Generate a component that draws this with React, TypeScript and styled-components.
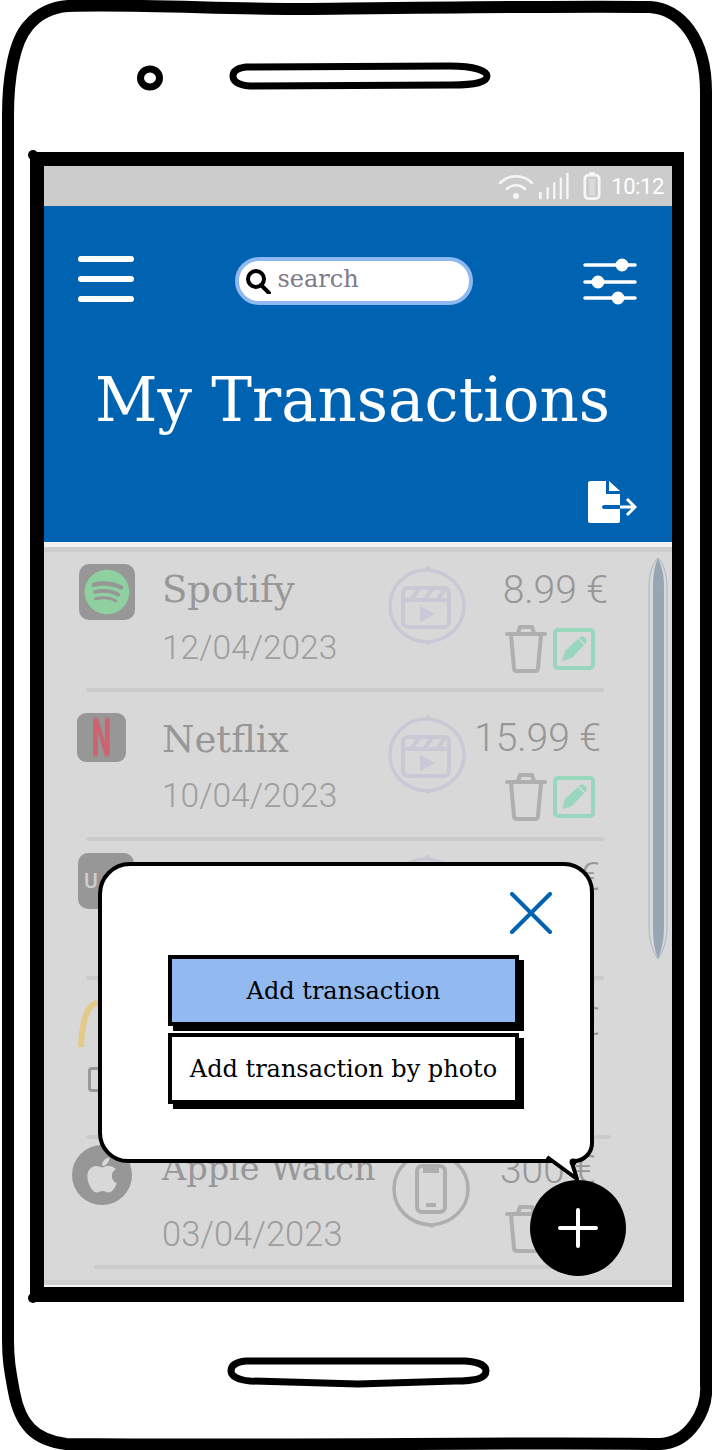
import React from 'react';
import styled, { createGlobalStyle } from 'styled-components';
import { FaApple, FaSpotify } from 'react-icons/fa';

const SLAB = '"DejaVu Serif", serif';
const BLUE = '#0063b1';

const GlobalStyle = createGlobalStyle`
    html, body {
        margin: 0;
        padding: 0;
        background: #fff;
    }
    * {
        box-sizing: border-box;
    }
`;

const Phone = styled.div`
    position: relative;
    width: 712px;
    height: 1450px;
    padding: 166px 40px 0 44px;
    background: #fff;
    overflow: hidden;
`;
const FrameDrawing = styled.svg`
    position: absolute;
    left: 0;
    top: 0;
    pointer-events: none;
`;
const Screen = styled.div`
    position: relative;
    width: 628px;
    height: 1121px;
    display: flex;
    flex-direction: column;
    overflow: hidden;
`;
const StatusBar = styled.div`
    height: 40px;
    flex: none;
    background: #cccccc;
    display: flex;
    align-items: center;
    justify-content: flex-end;
    padding-right: 8px;
    color: #f6f6f6;
`;
const StatusTime = styled.span`
    font-family: Roboto, sans-serif;
    font-size: 22px;
    letter-spacing: -0.4px;
    margin-left: 10px;
    color: #fff;
`;
const Header = styled.header`
    height: 336px;
    flex: none;
    background: ${BLUE};
    padding: 50px 34px 0;
    display: flex;
    flex-direction: column;
`;
const TopRow = styled.div`
    display: flex;
    align-items: flex-start;
    justify-content: space-between;
`;
const Burger = styled.div`
    width: 56px;
    height: 46px;
    display: flex;
    flex-direction: column;
    justify-content: space-between;
    span {
        display: block;
        height: 6px;
        border-radius: 3px;
        background: #fff;
    }
`;
const SearchBox = styled.div`
    width: 238px;
    height: 48px;
    margin: 1px 10px 0 0;
    border: 4px solid #8fb8f0;
    border-radius: 24px;
    background: #fff;
    display: flex;
    align-items: center;
    gap: 7px;
    padding-left: 7px;
    color: #7d7a8a;
    font-family: ${SLAB};
    font-size: 24px;
`;
const SearchText = styled.span`
    margin-bottom: 4px;
`;
const Title = styled.h1`
    margin: 49px 11px 0 0;
    text-align: center;
    color: #fff;
    font-family: ${SLAB};
    font-weight: 400;
    font-size: 61px;
    line-height: 90px;
    white-space: nowrap;
`;
const ExportRow = styled.div`
    display: flex;
    justify-content: flex-end;
    margin: 35px 1px 0 0;
`;
const Rule = styled.div`
    height: 5px;
    flex: none;
    background: #f2f2f2;
`;
const TopBand = styled.div`
    height: 5px;
    flex: none;
    background: #cecece;
`;
const List = styled.div`
    flex: 1;
    background: #d8d8d8;
    display: flex;
    flex-direction: column;
`;
const Row = styled.div<{ $height: number; $top: number }>`
    position: relative;
    height: ${p => p.$height}px;
    flex: none;
    padding: ${p => p.$top}px 64px 0 0;
    display: grid;
    grid-template-columns: 118px 226px 80px 1fr;
    align-items: start;
`;
const LogoCell = styled.div<{ $x: number }>`
    padding-left: ${p => p.$x}px;
`;
const SquareLogo = styled.div<{ $size: number; $tone?: string; $align?: string }>`
    width: ${p => p.$size}px;
    height: ${p => p.$size}px;
    border-radius: ${p => (p.$size > 50 ? 10 : 9)}px;
    background: #979797;
    color: ${p => p.$tone ?? '#8fd0a0'};
    display: flex;
    align-items: center;
    justify-content: ${p => p.$align ?? 'center'};
`;
const NetflixLetter = styled.span`
    font-family: Roboto, sans-serif;
    font-weight: 900;
    font-size: 44px;
    line-height: 1;
    transform: scale(0.64, 1.2);
    filter: blur(1px);
`;
const UberLetter = styled.span`
    margin-left: 6px;
    font-family: Roboto, sans-serif;
    font-weight: 500;
    font-size: 21px;
    color: #cfcfcf;
`;
const RoundLogo = styled.div`
    width: 60px;
    height: 60px;
    border-radius: 50%;
    background: #979797;
    color: #d8d8d8;
    display: flex;
    align-items: center;
    justify-content: center;
`;
const SmallTag = styled.div`
    width: 30px;
    height: 25px;
    margin: 19px 0 0 12px;
    border: 3px solid #999;
    border-radius: 4px;
`;
const TextCell = styled.div<{ $top: number }>`
    padding-top: ${p => p.$top}px;
    display: flex;
    flex-direction: column;
`;
const RowTitle = styled.div<{ $size: number }>`
    color: #979797;
    font-family: ${SLAB};
    font-size: ${p => p.$size}px;
    line-height: 44px;
    white-space: nowrap;
`;
const RowDate = styled.div<{ $gap: number; $size: number }>`
    margin-top: ${p => p.$gap}px;
    color: #9e9e9e;
    font-family: Roboto, sans-serif;
    font-weight: 300;
    font-size: ${p => p.$size}px;
    line-height: 40px;
    white-space: nowrap;
`;
const CategoryCell = styled.div<{ $top: number; $x: number }>`
    padding: ${p => p.$top}px 0 0 ${p => p.$x}px;
`;
const AmountCell = styled.div<{ $top: number; $right: number }>`
    padding: ${p => p.$top}px ${p => p.$right}px 0 0;
    display: flex;
    flex-direction: column;
    align-items: flex-end;
`;
const Amount = styled.div`
    color: #979797;
    font-family: Roboto, sans-serif;
    font-weight: 300;
    font-size: 39px;
    line-height: 44px;
    white-space: nowrap;
`;
const Actions = styled.div<{ $right: number }>`
    display: flex;
    align-items: flex-start;
    gap: 6px;
    margin: 13px ${p => -p.$right + 13}px 0 0;
`;
const EditBox = styled.div`
    width: 42px;
    height: 42px;
    margin-top: 3px;
    border: 4px solid #98d6bd;
    border-radius: 5px;
    display: flex;
    align-items: center;
    justify-content: center;
`;
const Divider = styled.div<{ $left: number; $right: number }>`
    position: absolute;
    left: ${p => p.$left}px;
    right: ${p => p.$right}px;
    bottom: 0;
    height: 4px;
    background: #cbcbcb;
    border-radius: 3px;
`;
const BottomBand = styled.div`
    margin-top: auto;
    height: 7px;
    flex: none;
    background: #cfcfcf;
    border-bottom: 2px solid #f4f4f4;
`;
const Scrollbar = styled.svg`
    position: absolute;
    left: 604px;
    top: 391px;
`;
const Popup = styled.div`
    position: absolute;
    left: 54px;
    top: 696px;
    width: 496px;
    height: 301px;
    padding: 26px 38px 0 66px;
    background: #fff;
    border: 4px solid #000;
    border-radius: 32px 30px 20px 30px;
`;
const PopupTail = styled.svg`
    position: absolute;
    left: 438px;
    top: 289px;
`;
const CloseIcon = styled.svg`
    display: block;
    margin-left: auto;
`;
const PopupButtons = styled.div`
    margin-top: 21px;
    display: flex;
    flex-direction: column;
    gap: 7px;
`;
const PopupButton = styled.div<{ $primary?: boolean }>`
    width: 351px;
    height: 71px;
    border: 4px solid #000;
    box-shadow: 5px 5px 0 #000;
    background: ${p => (p.$primary ? '#93b9f1' : '#fff')};
    color: #000;
    font-family: ${SLAB};
    font-size: 24px;
    display: flex;
    align-items: center;
    justify-content: center;
    white-space: nowrap;
`;
const Fab = styled.div`
    position: absolute;
    left: 486px;
    top: 1014px;
    width: 96px;
    height: 96px;
    border-radius: 50%;
    background: #000;
    display: flex;
    align-items: center;
    justify-content: center;
`;

const PhoneFrame = () => (
    <FrameDrawing width={712} height={1450} viewBox="0 0 712 1450" fill="none" stroke="#000" strokeLinecap="round" strokeLinejoin="round">
        <path strokeWidth={12} d="M8 115 C8 78 14 42 28 26 C38 14 52 7 68 6 C140 4 220 9 295 9 C400 8 560 6 650 7 C680 9 706 38 706 92 L706 1385 C708 1410 690 1443 660 1444 C520 1442 300 1446 66 1444 C34 1440 20 1424 14 1392 C10 1370 8 1360 8 1340 Z" />
        <ellipse cx={150} cy={78} rx={9.5} ry={9} strokeWidth={7} />
        <path strokeWidth={7} d="M246 67 L450 66 C475 66 487 71 487 76 C487 82 476 85 452 85 L250 86 C238 85 233 81 233 76 C233 71 238 68 246 67 Z" />
        <path strokeWidth={7} d="M246 1361 L465 1361 C482 1362 486 1367 486 1371 C486 1378 476 1381 455 1381 L358 1384 L250 1381 C238 1380 231 1376 231 1371 C231 1365 236 1362 246 1361 Z" />
        <path fill="#000" stroke="none" fillRule="evenodd" d="M30 152 L684 152 L684 1302 L30 1302 Z M44 166 L44 1287 L672 1287 L672 166 Z" />
        <circle cx={33} cy={155} r={5} fill="#000" stroke="none" />
        <circle cx={33} cy={1298} r={5} fill="#000" stroke="none" />
    </FrameDrawing>
);

const Wifi = () => (
    <svg width={36} height={27} viewBox="0 0 36 27" fill="none" stroke="currentColor" strokeWidth={2.5} strokeLinecap="round">
        <path d="M2 10 C11 1 25 1 34 10" />
        <path d="M9 16 C14 11 22 11 27 16" />
        <circle cx={18} cy={23} r={3} fill="currentColor" stroke="none" />
    </svg>
);

const Signal = () => (
    <svg width={32} height={28} viewBox="0 0 34 28" fill="currentColor" style={{ marginLeft: 4 }}>
        <rect x={1} y={20} width={3} height={8} rx={1} />
        <rect x={9} y={15} width={2.5} height={13} rx={1} />
        <rect x={16} y={10} width={2.5} height={18} rx={1} />
        <rect x={23} y={5} width={2.5} height={23} rx={1} />
        <rect x={30} y={0} width={2.5} height={28} rx={1} />
    </svg>
);

const Battery = () => (
    <svg width={18} height={32} viewBox="0 0 20 32" fill="none" stroke="currentColor" strokeWidth={3} style={{ marginLeft: 13 }}>
        <rect x={2} y={4} width={16} height={26} rx={4} />
        <rect x={7} y={8} width={6} height={18} fill="currentColor" fillOpacity={0.35} strokeWidth={0} />
        <path d="M7 2 L13 2" />
    </svg>
);

const Magnifier = () => (
    <svg width={25} height={25} viewBox="0 0 25 25" fill="none" stroke="#000" strokeWidth={4}>
        <circle cx={10} cy={10} r={8} />
        <path d="M15 16 L23 24" strokeLinecap="round" />
    </svg>
);

const Sliders = () => (
    <svg width={54} height={48} viewBox="0 0 54 48" fill="#fff" stroke="#fff" strokeWidth={3.5} strokeLinecap="round" style={{ margin: '2px 1px 0 0' }}>
        <path d="M2 7 L52 7 M2 24 L52 24 M2 40 L52 40" />
        <circle cx={39} cy={7} r={5.5} strokeWidth={2} />
        <circle cx={15} cy={24} r={5.5} strokeWidth={2} />
        <circle cx={35} cy={40} r={5.5} strokeWidth={2} />
    </svg>
);

const ExportIcon = () => (
    <svg width={50} height={44} viewBox="0 0 50 44" style={{ display: 'block' }}>
        <path fill="#fff" d="M3 1 L19 1 L19 14 L33 14 L33 41 C33 42 32 43 31 43 L3 43 C2 43 1 42 1 41 L1 3 C1 2 2 1 3 1 Z" />
        <path fill="#fff" d="M22 1 L33 11 L22 11 Z" />
        <path stroke={BLUE} strokeWidth={4} strokeLinecap="round" d="M17 27 L32 27" />
        <path stroke="#fff" strokeWidth={3} fill="none" d="M33 27 L47 27 M40 19 L48 27 L40 35" />
    </svg>
);

const Clapper = () => (
    <g fill="none" stroke="currentColor" strokeWidth={4}>
        <rect x={15} y={22} width={46} height={39} rx={5} />
        <path d="M15 34 L61 34" />
        <path d="M24 33 L31 23 M37 33 L44 23 M50 33 L57 23" />
        <path fill="currentColor" stroke="none" d="M32 40 L47 48 L32 56 Z" />
    </g>
);

const PhoneGlyph = () => (
    <g fill="none" stroke="currentColor" strokeWidth={4}>
        <rect x={25} y={17} width={28} height={46} rx={5} />
        <path fill="currentColor" d="M33 18 L45 18 L45 22 L33 22 Z" />
        <path d="M34 56 L44 56" />
    </g>
);

const CategoryIcon: React.FC<{ kind: 'film' | 'phone'; color: string }> = ({ kind, color }) => (
    <svg width={78} height={80} viewBox="0 0 78 80" style={{ color, display: 'block' }}>
        <path fill="none" stroke="currentColor" strokeWidth={3.5} d="M40 2 L40 4 C60 6 76 20 76 40 C76 60 60 74 40 76 L40 78 L39 76 C18 75 2 60 2 40 C2 20 18 4 38 4 Z" />
        {kind === 'film' ? <Clapper /> : <PhoneGlyph />}
    </svg>
);

const Trash = () => (
    <svg width={42} height={48} viewBox="0 0 42 48" fill="none" stroke="#afafaf" strokeWidth={4} strokeLinejoin="round" strokeLinecap="round" style={{ display: 'block' }}>
        <path d="M2 9 L40 9" />
        <path d="M13 8 L15 2 L27 2 L29 8" />
        <path d="M6 10 L9 43 C9 45 10 46 12 46 L30 46 C32 46 33 45 33 43 L36 10" />
    </svg>
);

const Pencil = () => (
    <svg width={26} height={26} viewBox="0 0 26 26" fill="#98d6bd">
        <path d="M1 25 L4 15 L17 3 L23 9 L11 22 Z" />
        <path d="M19 1 C20 0 22 0 23 1 L25 3 C26 4 26 6 25 7 L24 8 L18 2 Z" />
    </svg>
);

const McArch = () => (
    <svg width={50} height={48} viewBox="0 0 50 48" fill="none" stroke="#e3ca88" strokeWidth={6} style={{ display: 'block' }}>
        <path d="M5 47 C6 20 12 3 22 3 C30 3 34 20 36 47" />
    </svg>
);

const PlusIcon = () => (
    <svg width={40} height={40} viewBox="0 0 40 40" stroke="#fff" strokeWidth={4} strokeLinecap="round">
        <path d="M20 2 L20 38 M2 20 L38 20" />
    </svg>
);

type RowData = {
    id: string;
    height: number;
    top: number;
    logoX: number;
    logo: React.ReactNode;
    title?: string;
    titleSize?: number;
    titleTop?: number;
    date?: string;
    dateGap?: number;
    dateSize?: number;
    kind: 'film' | 'phone';
    kindColor: string;
    kindTop: number;
    kindX: number;
    amount: string;
    amountTop: number;
    amountRight: number;
    actions: boolean;
    divider: [number, number];
};

const rows: RowData[] = [
    {
        id: 'spotify', height: 140, top: 12, logoX: 35,
        logo: <SquareLogo $size={56}><FaSpotify size={46} /></SquareLogo>,
        title: 'Spotify', titleSize: 37, titleTop: 4, date: '12/04/2023', dateGap: 16, dateSize: 33.5,
        kind: 'film', kindColor: '#cbc8d6', kindTop: 2, kindX: 0,
        amount: '8.99 €', amountTop: 4, amountRight: 0, actions: true, divider: [42, 68],
    },
    {
        id: 'netflix', height: 149, top: 21, logoX: 33,
        logo: <SquareLogo $size={49} $tone="#cc6470"><NetflixLetter>N</NetflixLetter></SquareLogo>,
        title: 'Netflix', titleSize: 37, titleTop: 5, date: '10/04/2023', dateGap: 14, dateSize: 33.5,
        kind: 'film', kindColor: '#cbc8d6', kindTop: 2, kindX: 0,
        amount: '15.99 €', amountTop: 3, amountRight: 7, actions: true, divider: [42, 68],
    },
    {
        id: 'uber', height: 139, top: 12, logoX: 34,
        logo: <SquareLogo $size={56} $align="flex-start"><UberLetter>U</UberLetter></SquareLogo>,
        kind: 'film', kindColor: '#cbc8d6', kindTop: 2, kindX: 0,
        amount: '€', amountTop: 2, amountRight: 8, actions: false, divider: [42, 68],
    },
    {
        id: 'mcdonalds', height: 159, top: 20, logoX: 32,
        logo: <><McArch /><SmallTag /></>,
        kind: 'film', kindColor: '#cbc8d6', kindTop: 2, kindX: 0,
        amount: '€', amountTop: 0, amountRight: 8, actions: false, divider: [42, 61],
    },
    {
        id: 'apple', height: 130, top: 6, logoX: 28,
        logo: <RoundLogo><FaApple size={40} /></RoundLogo>,
        title: 'Apple Watch', titleSize: 33.5, titleTop: 2, date: '03/04/2023', dateGap: 23, dateSize: 34.5,
        kind: 'phone', kindColor: '#aeaeae', kindTop: 4, kindX: 4,
        amount: '300 €', amountTop: 3, amountRight: 12, actions: true, divider: [50, 61],
    },
];

export default function App() {
    return (
        <Phone>
            <GlobalStyle />
            <Screen>
                <StatusBar>
                    <Wifi />
                    <Signal />
                    <Battery />
                    <StatusTime>10:12</StatusTime>
                </StatusBar>
                <Header>
                    <TopRow>
                        <Burger><span /><span /><span /></Burger>
                        <SearchBox>
                            <Magnifier />
                            <SearchText>search</SearchText>
                        </SearchBox>
                        <Sliders />
                    </TopRow>
                    <Title>My Transactions</Title>
                    <ExportRow><ExportIcon /></ExportRow>
                </Header>
                <Rule />
                <TopBand />
                <List>
                    {rows.map(r => (
                        <Row key={r.id} $height={r.height} $top={r.top}>
                            <LogoCell $x={r.logoX}>{r.logo}</LogoCell>
                            <TextCell $top={r.titleTop ?? 0}>
                                {r.title && <RowTitle $size={r.titleSize ?? 37}>{r.title}</RowTitle>}
                                {r.date && <RowDate $gap={r.dateGap ?? 0} $size={r.dateSize ?? 33}>{r.date}</RowDate>}
                            </TextCell>
                            <CategoryCell $top={r.kindTop} $x={r.kindX}>
                                <CategoryIcon kind={r.kind} color={r.kindColor} />
                            </CategoryCell>
                            <AmountCell $top={r.amountTop} $right={r.amountRight}>
                                <Amount>{r.amount}</Amount>
                                {r.actions && (
                                    <Actions $right={r.amountRight}>
                                        <Trash />
                                        <EditBox><Pencil /></EditBox>
                                    </Actions>
                                )}
                            </AmountCell>
                            <Divider $left={r.divider[0]} $right={r.divider[1]} />
                        </Row>
                    ))}
                    <BottomBand />
                </List>
                <Scrollbar width={20} height={404} viewBox="0 0 20 404">
                    <path fill="#d8d8d8" stroke="#a9b5c3" strokeWidth={1} d="M10 1 C14 5 19 14 19 30 L19 370 C19 385 14 396 10 402 C6 396 1 385 1 370 L1 30 C1 14 6 5 10 1 Z" />
                    <path fill="#9aa5b3" d="M10 1 C13 8 16 16 16 30 L16 370 C16 385 13 394 10 402 C7 394 5 385 5 370 L5 30 C5 16 7 8 10 1 Z" />
                </Scrollbar>
                <Popup>
                    <CloseIcon width={42} height={42} viewBox="0 0 42 42" fill="none" stroke={BLUE} strokeWidth={4} strokeLinecap="round">
                        <path d="M2 2 L40 40 M40 2 L2 40" />
                    </CloseIcon>
                    <PopupButtons>
                        <PopupButton $primary>Add transaction</PopupButton>
                        <PopupButton>Add transaction by photo</PopupButton>
                    </PopupButtons>
                    <PopupTail width={50} height={30} viewBox="0 0 50 30" overflow="visible">
                        <path fill="#fff" d="M6 2 L36 24 L33 8 L33 2 Z" />
                        <path fill="none" stroke="#000" strokeWidth={4} strokeLinejoin="round" d="M7 2 L37 24 L32 8" />
                        <circle cx={33} cy={7} r={3.5} fill="#000" />
                    </PopupTail>
                </Popup>
                <Fab><PlusIcon /></Fab>
            </Screen>
            <PhoneFrame />
        </Phone>
    );
}
